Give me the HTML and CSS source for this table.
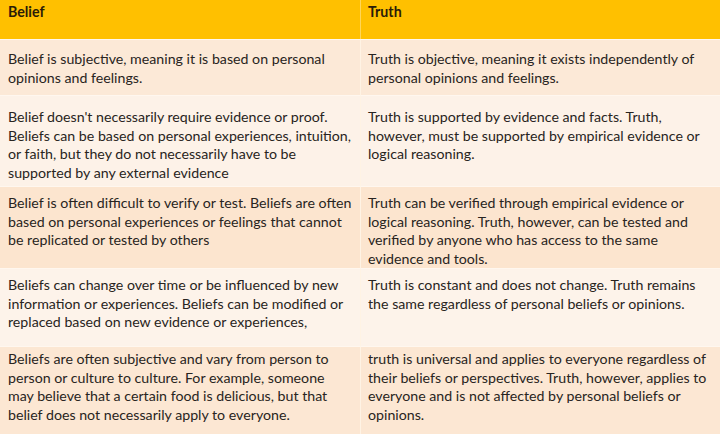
FILE: index.html
```html
<!DOCTYPE html>
<html>
<head>
<meta charset="utf-8">
<link rel="stylesheet" href="styles.css">
</head>
<body>
<div class="table">
  <div class="cell head">Belief</div>
  <div class="cell head">Truth</div>

  <div class="cell r1">Belief is subjective, meaning it is based on personal<br>opinions and feelings.</div>
  <div class="cell r1">Truth is objective, meaning it exists independently of<br>personal opinions and feelings.</div>

  <div class="cell r2">Belief doesn't necessarily require evidence or proof.<br>Beliefs can be based on personal experiences, intuition,<br>or faith, but they do not necessarily have to be<br>supported by any external evidence</div>
  <div class="cell r2">Truth is supported by evidence and facts. Truth,<br>however, must be supported by empirical evidence or<br>logical reasoning.</div>

  <div class="cell r3">Belief is often difficult to verify or test. Beliefs are often<br>based on personal experiences or feelings that cannot<br>be replicated or tested by others</div>
  <div class="cell r3">Truth can be verified through empirical evidence or<br>logical reasoning. Truth, however, can be tested and<br>verified by anyone who has access to the same<br>evidence and tools.</div>

  <div class="cell r4">Beliefs can change over time or be influenced by new<br>information or experiences. Beliefs can be modified or<br>replaced based on new evidence or experiences,</div>
  <div class="cell r4">Truth is constant and does not change. Truth remains<br>the same regardless of personal beliefs or opinions.</div>

  <div class="cell r5">Beliefs are often subjective and vary from person to<br>person or culture to culture. For example, someone<br>may believe that a certain food is delicious, but that<br>belief does not necessarily apply to everyone.</div>
  <div class="cell r5">truth is universal and applies to everyone regardless of<br>their beliefs or perspectives. Truth, however, applies to<br>everyone and is not affected by personal beliefs or<br>opinions.</div>
</div>
</body>
</html>
```

FILE: styles.css
```css
html, body {
  margin: 0;
  padding: 0;
  background: #fdf1e6;
}
body {
  width: 720px;
  height: 434px;
  overflow: hidden;
  font-family: "Lato", "Liberation Sans", sans-serif;
  font-size: 14.2px;
  line-height: 18.6px;
  color: #282421;
}
.table {
  display: grid;
  grid-template-columns: 360px 360px;
  grid-template-rows: 39px 56px 91px 82px 78px 88px;
  width: 720px;
  height: 434px;
}
.cell {
  padding-left: 8px;
  white-space: nowrap;
  overflow: hidden;
  box-sizing: border-box;
  border-top: 1px solid #fff7ef;
}
.cell:nth-child(even) {
  padding-left: 7px;
  border-left: 1px solid #fff3e4;
}
.head {
  background: #ffc000;
  font-weight: 700;
  color: #2a1c08;
  padding-top: 3px;
  border-top: none;
}
.head:nth-child(even) {
  border-left: 1px solid #ffd659;
}
.r1 { background: #fce9d7; padding-top: 10px; }
.r2 { background: #fdf2e8; padding-top: 12px; }
.r3 { background: #fce5cf; padding-top: 7px; }
.r4 { background: #fdf3ea; padding-top: 7px; }
.r5 { background: #fce7d3; padding-top: 3px; }
```
